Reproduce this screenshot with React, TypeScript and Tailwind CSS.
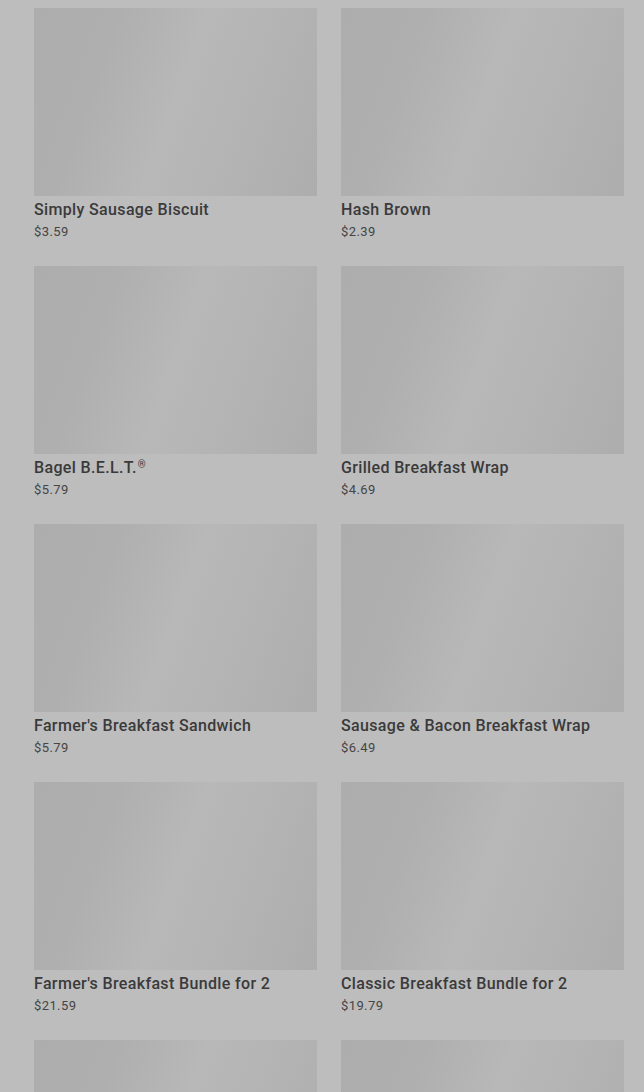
import React from "react";

const items = [
  ["Simply Sausage Biscuit", "$3.59"],
  ["Hash Brown", "$2.39"],
  ["Bagel B.E.L.T.", "$5.79", true],
  ["Grilled Breakfast Wrap", "$4.69"],
  ["Farmer's Breakfast Sandwich", "$5.79"],
  ["Sausage & Bacon Breakfast Wrap", "$6.49"],
  ["Farmer's Breakfast Bundle for 2", "$21.59"],
  ["Classic Breakfast Bundle for 2", "$19.79"],
  ["", ""],
  ["", ""],
] as [string, string, boolean?][];

export default function App() {
  return (
    <div
      className="w-[644px] h-[1092px] overflow-hidden bg-[#bdbdbd] pl-[34px] pr-[20px] pt-[8px]"
      style={{ fontFamily: "Roboto, 'Noto Sans', sans-serif" }}
    >
      <div className="grid grid-cols-2 gap-x-[24px] gap-y-[24px]">
        {items.map(([name, price, reg], i) => (
          <div key={i} className="flex flex-col">
            <div className="h-[188px] bg-[linear-gradient(110deg,#adadad_0%,#afafaf_25%,#b8b8b8_50%,#b3b3b3_75%,#adadad_100%)]" />
            <div className="mt-[2px] h-[24px] text-[16px] leading-[24px] font-medium text-[#3a3a3a] tracking-[0.35px]">
              {name}
              {reg && <span className="relative top-[-5px] text-[10px] leading-none ml-[1px]">®</span>}
            </div>
            <div className="h-[20px] text-[13px] leading-[20px] text-[#454545] tracking-[0.4px]">{price}</div>
          </div>
        ))}
      </div>
    </div>
  );
}
